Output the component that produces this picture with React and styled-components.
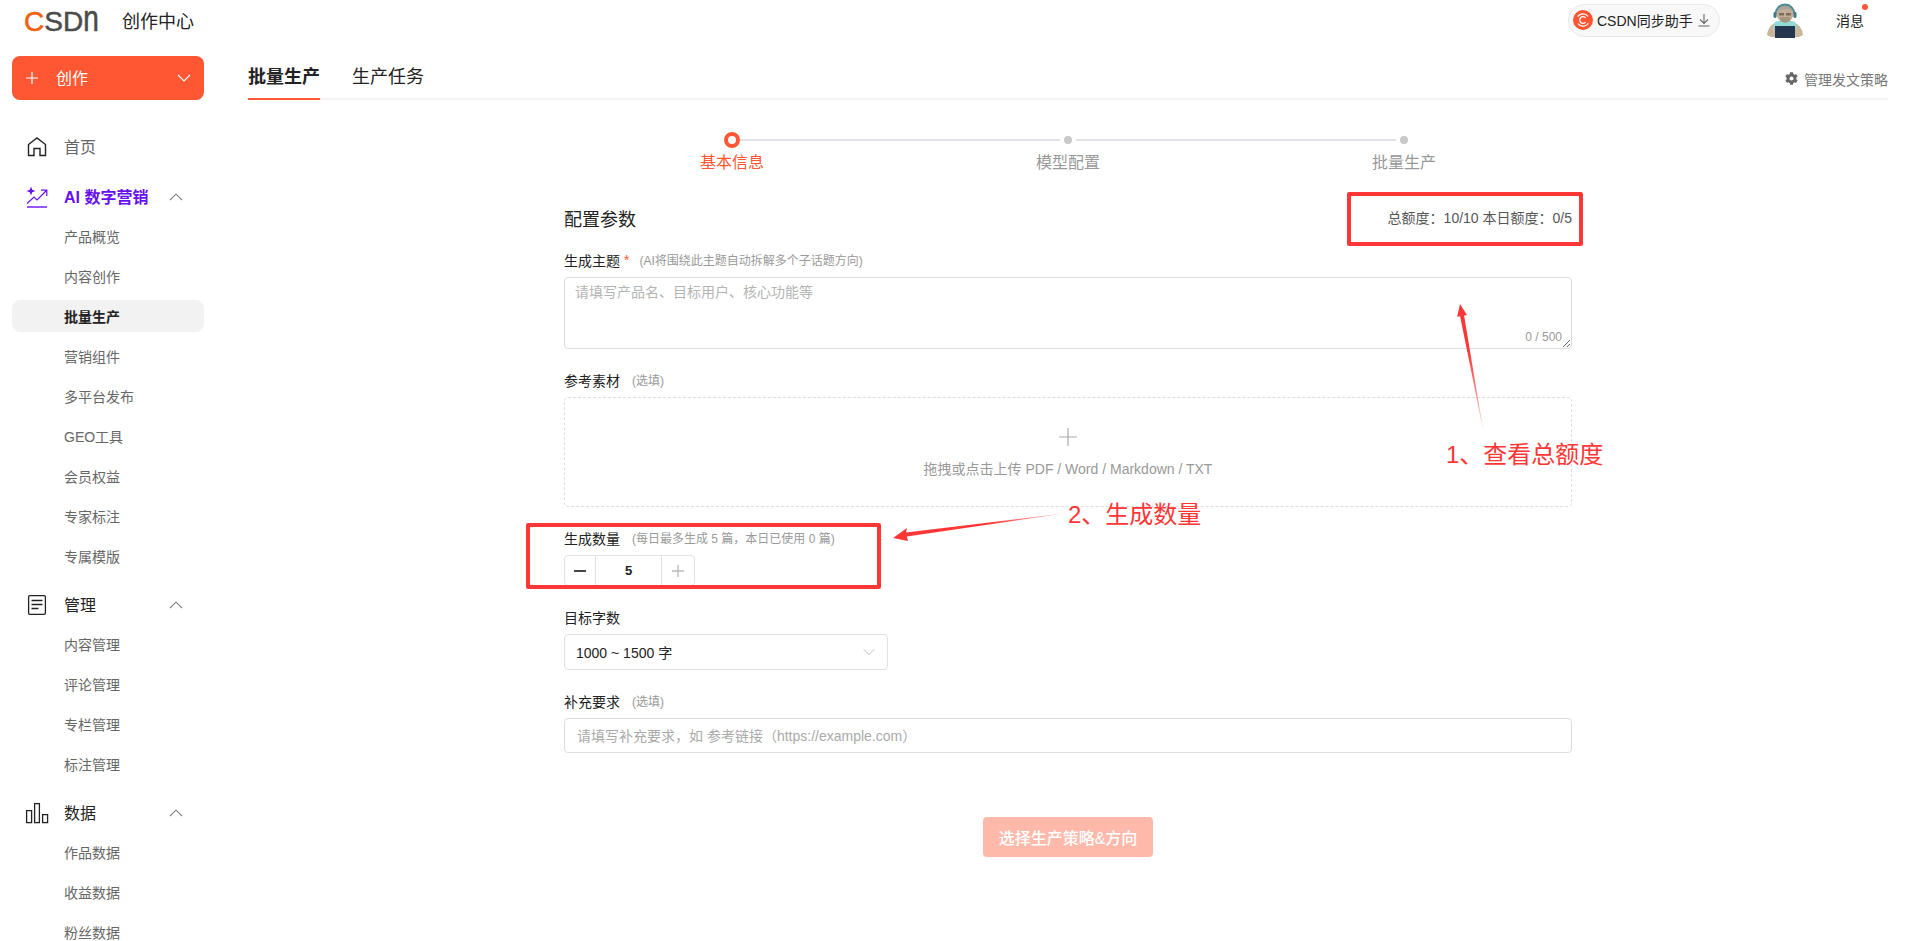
import styled, { createGlobalStyle } from "styled-components";
import { FaCog } from "react-icons/fa";

const FONT = `"Liberation Sans", "Noto Sans CJK SC", sans-serif`;
const ORANGE = "#ff5733";
const RED = "#ff3636";

const GlobalStyle = createGlobalStyle`
  html, body { margin: 0; padding: 0; background: #fff; }
  body { font-family: ${FONT}; color: #222; }
  * { box-sizing: border-box; }
`;

const Shell = styled.div`
  position: relative;
  height: 941px;
  overflow: hidden;
`;

/* top bar */
const TopBar = styled.header`
  height: 40px;
  display: flex;
  align-items: center;
  padding: 0 55px 0 24px;
`;
const Logo = styled.div`
  display: flex;
  align-items: flex-end;
  width: 98px;
  height: 30px;
  margin-top: 4px;
  font-size: 28px;
  line-height: 30px;
  color: #4b4b4b;
  -webkit-text-stroke: 0.5px currentColor;
`;
const LogoC = styled.span`
  color: #f0600f;
`;
const LogoN = styled.span`
  display: inline-block;
  transform: scaleY(1.3);
  transform-origin: 50% 80%;
`;
const AppName = styled.div`
  font-size: 18px;
  color: #222;
`;
const TopRight = styled.div`
  margin-left: auto;
  display: flex;
  align-items: center;
`;
const SyncChip = styled.div`
  width: 152px;
  height: 33px;
  display: flex;
  align-items: center;
  gap: 4px;
  padding-left: 4px;
  border: 1px solid #e8e8e8;
  border-radius: 17px;
  background: #f8f8f8;
  font-size: 14px;
  color: #222;
`;
const Avatar = styled.div`
  width: 38px;
  height: 36px;
  margin: 0 32px 0 46px;
`;
const Msg = styled.div`
  position: relative;
  font-size: 14px;
  color: #222;
  width: 28px;
`;
const MsgDot = styled.span`
  position: absolute;
  top: -6px;
  right: -4px;
  width: 6px;
  height: 6px;
  border-radius: 50%;
  background: ${ORANGE};
`;

/* body */
const Body = styled.div`
  display: flex;
  height: 901px;
`;
const Sidebar = styled.aside`
  width: 216px;
  flex: none;
  padding: 16px 12px 0;
`;
const CreateBtn = styled.div`
  height: 44px;
  display: flex;
  align-items: center;
  padding: 0 12px 0 14px;
  border-radius: 8px;
  background: ${ORANGE};
  color: #fff;
  font-size: 16px;
`;
const CreateLabel = styled.span`
  margin-left: 18px;
  padding-bottom: 2px;
  flex: 1;
`;
const NavHead = styled.div`
  height: 38px;
  margin-top: ${(p) => p.$mt || 10}px;
  display: flex;
  align-items: center;
  padding: 0 0 2px 52px;
  position: relative;
  font-size: 16px;
  font-weight: ${(p) => (p.$ai ? 700 : 400)};
  color: ${(p) => p.$color || "#222"};
`;
const NavIcon = styled.span`
  position: absolute;
  left: 12px;
  top: 50%;
  transform: translateY(-50%);
  display: flex;
  width: 26px;
  justify-content: center;
`;
const NavChevron = styled.span`
  position: absolute;
  left: 156px;
  top: 50%;
  transform: translateY(-50%);
  display: flex;
`;
const NavList = styled.div`
  display: flex;
  flex-direction: column;
  gap: 8px;
  padding: 4px 0;
`;
const NavItem = styled.div`
  height: 32px;
  display: flex;
  align-items: center;
  padding: 0 0 1px 52px;
  border-radius: 8px;
  font-size: 14px;
  font-weight: ${(p) => (p.$active ? 700 : 400)};
  color: ${(p) => (p.$active ? "#222" : "#666")};
  background: ${(p) => (p.$active ? "#f2f2f2" : "transparent")};
`;

/* main */
const Main = styled.main`
  flex: 1;
  padding: 16px 31px 0 32px;
`;
const TabBar = styled.div`
  height: 44px;
  display: flex;
  align-items: flex-start;
  border-bottom: 2px solid #f4f4f4;
`;
const Tab = styled.div`
  height: 44px;
  line-height: 42px;
  margin-right: 32px;
  font-size: 18px;
  font-weight: ${(p) => (p.$active ? 700 : 400)};
  color: #222;
  border-bottom: 2px solid ${(p) => (p.$active ? ORANGE : "transparent")};
`;
const Strategy = styled.div`
  margin-left: auto;
  height: 44px;
  padding-top: 1px;
  display: flex;
  align-items: center;
  gap: 6px;
  font-size: 14px;
  color: #777;
`;
const Form = styled.div`
  width: 1008px;
  margin: 32px auto 0;
`;
const StepRail = styled.div`
  display: flex;
  align-items: center;
  padding: 0 160px;
`;
const StepRing = styled.div`
  width: 16px;
  height: 16px;
  flex: none;
  border-radius: 50%;
  background: #fff;
  border: 4px solid ${ORANGE};
`;
const StepDot = styled.div`
  width: 8px;
  height: 8px;
  flex: none;
  margin: 0 4px;
  border-radius: 50%;
  background: #c8c8c8;
`;
const StepLine = styled.div`
  flex: 1;
  height: 2px;
  background: #e0e0e6;
`;
const StepLabels = styled.div`
  display: grid;
  grid-template-columns: repeat(3, 1fr);
  margin-top: 4px;
`;
const StepLabel = styled.div`
  text-align: center;
  font-size: 16px;
  line-height: 22px;
  color: ${(p) => (p.$on ? ORANGE : "#999")};
`;
const FormHead = styled.div`
  display: flex;
  justify-content: space-between;
  align-items: center;
  height: 28px;
  margin: 31px 0 18px;
`;
const FormTitle = styled.div`
  font-size: 18px;
  padding-bottom: 2px;
  color: #222;
`;
const Quota = styled.div`
  font-size: 14px;
  padding-bottom: 4px;
  color: #555;
`;
const Field = styled.div`
  margin-bottom: 22px;
`;
const Label = styled.div`
  height: 20px;
  margin-bottom: 6px;
  padding-bottom: 3px;
  display: flex;
  align-items: center;
  font-size: 14px;
  color: #222;
`;
const Star = styled.span`
  color: ${ORANGE};
  margin-left: 4px;
`;
const Hint = styled.span`
  margin-left: ${(p) => p.$ml || 12}px;
  font-size: 12px;
  color: #999;
`;
const AreaWrap = styled.div`
  position: relative;
  height: 72px;
`;
const Area = styled.textarea`
  display: block;
  width: 100%;
  height: 72px;
  padding: 4px 10px;
  border: 1px solid #dcdde3;
  border-radius: 4px;
  outline: none;
  font: 14px/20px ${FONT};
  resize: vertical;
  &::placeholder { color: #b4b4b4; }
`;
const Counter = styled.span`
  position: absolute;
  right: 10px;
  bottom: 5px;
  font-size: 12px;
  color: #999;
`;
const Drop = styled.div`
  height: 110px;
  display: flex;
  flex-direction: column;
  align-items: center;
  border: 1px dashed #dedede;
  border-radius: 4px;
  padding-top: 30px;
  font-size: 14px;
  color: #999;
`;
const DropText = styled.div`
  margin-top: 13px;
  line-height: 20px;
`;
const Counterbox = styled.div`
  width: 131px;
  height: 31px;
  display: flex;
  border: 1px solid #e2e2e2;
  border-radius: 4px;
`;
const CountBtn = styled.div`
  width: ${(p) => p.$w}px;
  flex: none;
  display: flex;
  align-items: center;
  justify-content: center;
  border-left: ${(p) => (p.$line ? "1px solid #e2e2e2" : "none")};
  border-right: ${(p) => (p.$lineR ? "1px solid #e2e2e2" : "none")};
`;
const CountValue = styled.div`
  flex: 1;
  text-align: center;
  line-height: 29px;
  font-size: 13px;
  font-weight: 700;
`;
const Select = styled.div`
  width: 324px;
  height: 36px;
  display: flex;
  align-items: center;
  justify-content: space-between;
  padding: 0 11px;
  border: 1px solid #e2e2e2;
  border-radius: 4px;
  font-size: 14px;
  color: #222;
`;
const Input = styled.input`
  display: block;
  width: 100%;
  height: 35px;
  padding: 0 12px;
  border: 1px solid #dcdde3;
  border-radius: 4px;
  outline: none;
  font: 14px ${FONT};
  &::placeholder { color: #aaa; }
`;
const Actions = styled.div`
  display: flex;
  justify-content: center;
  margin-top: 64px;
`;
const Submit = styled.div`
  width: 170px;
  height: 40px;
  display: flex;
  align-items: center;
  justify-content: center;
  border-radius: 4px;
  background: #ffb9ab;
  color: #fff;
  font-size: 16px;
  font-weight: 500;
`;

/* red notes drawn on top of the screenshot */
const NoteBox = styled.div`
  position: absolute;
  left: ${(p) => p.$x}px;
  top: ${(p) => p.$y}px;
  width: ${(p) => p.$w}px;
  height: ${(p) => p.$h}px;
  border: 4px solid ${RED};
  border-radius: 2px;
`;
const NoteText = styled.div`
  position: absolute;
  left: ${(p) => p.$x}px;
  top: ${(p) => p.$y}px;
  font-size: 24px;
  line-height: 32px;
  color: ${RED};
  white-space: nowrap;
`;
const ArrowLayer = styled.svg`
  position: absolute;
  left: 0;
  top: 0;
  pointer-events: none;
`;

const Chevron = ({ up, color = "#888", size = 16 }) => (
  <svg width={size} height={size} viewBox="0 0 16 16" fill="none" stroke={color} strokeWidth="1.1">
    <path d={up ? "M2 11L8 5l6 6" : "M2 5l6 6 6-6"} />
  </svg>
);

const HomeIcon = () => (
  <svg width="20" height="20" viewBox="0 0 20 20" fill="none" stroke="#222" strokeWidth="1.4">
    <path d="M1.5 7.5L10 1l8.5 6.5v11H13v-7H7v7H1.5z" />
  </svg>
);
const AiIcon = () => (
  <svg width="22" height="22" viewBox="0 0 22 22" fill="none" stroke="#6610f2" strokeWidth="1.2">
    <path d="M5 0.5l1.2 3.3 3.3 1.2-3.3 1.2L5 9.5 3.8 6.2 0.5 5l3.3-1.2z" fill="#6610f2" stroke="none" />
    <path d="M1 17.5l7-6.5 3 3L20.5 4.5M15 4.2h5.8V10" />
    <path d="M1 21h20" strokeWidth="1.4" />
  </svg>
);
const DocIcon = () => (
  <svg width="20" height="22" viewBox="0 0 20 22" fill="none" stroke="#222" strokeWidth="1.3">
    <rect x="1.6" y="1.6" width="16.8" height="18.8" rx="1.4" />
    <path d="M4.5 6.5h11M4.5 10.5h11M4.5 14.5h7" />
  </svg>
);
const BarsIcon = () => (
  <svg width="24" height="22" viewBox="0 0 24 22" fill="none" stroke="#222" strokeWidth="1.3">
    <rect x="1.6" y="8.6" width="5" height="12" />
    <rect x="9.6" y="1.6" width="4.8" height="19" />
    <rect x="17.6" y="12.6" width="5" height="8" />
  </svg>
);
const SyncIcon = () => (
  <svg width="20" height="20" viewBox="0 0 20 20" fill="none">
    <circle cx="10" cy="10" r="10" fill="#fc5531" />
    <path d="M15 6.4A6.3 6.3 0 0 0 4.6 6.8M5 13.6a6.3 6.3 0 0 0 10.4-.4" stroke="#fff" strokeWidth="1.2" />
    <path d="M12.6 7.9a3.3 3.3 0 1 0 0 4.2" stroke="#fff" strokeWidth="1.3" />
  </svg>
);
const DownIcon = () => (
  <svg width="14" height="14" viewBox="0 0 14 14" fill="none" stroke="#666" strokeWidth="1.1">
    <path d="M7 1v9M3 6.5L7 10.5l4-4M1.5 13h11" />
  </svg>
);
const AvatarPic = () => (
  <svg width="38" height="36" viewBox="0 0 38 36">
    <path d="M1 33c1-8 5-11 10-13h16c5 2 9 5 10 13l-4 2H5z" fill="#c9b79d" />
    <path d="M9 20c3-2 17-2 20 0l2 7-24 0z" fill="#93dcd6" />
    <circle cx="19" cy="11" r="9" fill="#c2ae98" />
    <path d="M10 11c0-6 4-9 9-9s9 3 9 9c-2-3-5-4-9-4s-7 1-9 4z" fill="#a9a39a" />
    <path d="M9.5 12a9.5 9.5 0 0 1 19 0" fill="none" stroke="#4d8a98" strokeWidth="1.8" />
    <rect x="7.5" y="10" width="3" height="6" rx="1.4" fill="#3f7888" />
    <rect x="27.5" y="10" width="3" height="6" rx="1.4" fill="#3f7888" />
    <path d="M13 11h5v2.5h-5zM20 11h5v2.5h-5z" fill="#7d6a5a" />
    <path d="M14 15h10v4l-5 2-5-2z" fill="#a8957f" />
    <rect x="9" y="24" width="20" height="12" fill="#24374e" />
  </svg>
);

const menu = [
  { title: "AI 数字营销", icon: <AiIcon />, ai: true, items: ["产品概览", "内容创作", "批量生产", "营销组件", "多平台发布", "GEO工具", "会员权益", "专家标注", "专属模版"] },
  { title: "管理", icon: <DocIcon />, items: ["内容管理", "评论管理", "专栏管理", "标注管理"] },
  { title: "数据", icon: <BarsIcon />, items: ["作品数据", "收益数据", "粉丝数据"] },
];

const App = () => (
  <Shell>
    <GlobalStyle />
    <TopBar>
      <Logo>
        <LogoC>C</LogoC>SD<LogoN>n</LogoN>
      </Logo>
      <AppName>创作中心</AppName>
      <TopRight>
        <SyncChip>
          <SyncIcon />
          <span>CSDN同步助手</span>
          <DownIcon />
        </SyncChip>
        <Avatar><AvatarPic /></Avatar>
        <Msg>消息<MsgDot /></Msg>
      </TopRight>
    </TopBar>
    <Body>
      <Sidebar>
        <CreateBtn>
          <svg width="12" height="12" viewBox="0 0 12 12" stroke="#fff" strokeWidth="1.2"><path d="M6 0v12M0 6h12" /></svg>
          <CreateLabel>创作</CreateLabel>
          <Chevron color="#fff" />
        </CreateBtn>
        <NavHead $mt={28} $color="#666">
          <NavIcon><HomeIcon /></NavIcon>首页
        </NavHead>
        {menu.map((group, i) => (
          <div key={group.title}>
            <NavHead $mt={i === 0 ? 12 : 10} $ai={group.ai} $color={group.ai ? "#6610f2" : "#222"}>
              <NavIcon>{group.icon}</NavIcon>
              {group.title}
              <NavChevron><Chevron up /></NavChevron>
            </NavHead>
            <NavList>
              {group.items.map((item) => (
                <NavItem key={item} $active={item === "批量生产"}>{item}</NavItem>
              ))}
            </NavList>
          </div>
        ))}
      </Sidebar>
      <Main>
        <TabBar>
          <Tab $active>批量生产</Tab>
          <Tab>生产任务</Tab>
          <Strategy><FaCog size={13} color="#666" />管理发文策略</Strategy>
        </TabBar>
        <Form>
          <StepRail>
            <StepRing />
            <StepLine />
            <StepDot />
            <StepLine />
            <StepDot />
          </StepRail>
          <StepLabels>
            <StepLabel $on>基本信息</StepLabel>
            <StepLabel>模型配置</StepLabel>
            <StepLabel>批量生产</StepLabel>
          </StepLabels>
          <FormHead>
            <FormTitle>配置参数</FormTitle>
            <Quota>总额度：10/10 本日额度：0/5</Quota>
          </FormHead>
          <Field>
            <Label>生成主题<Star>*</Star><Hint $ml={10}>(AI将围绕此主题自动拆解多个子话题方向)</Hint></Label>
            <AreaWrap>
              <Area placeholder="请填写产品名、目标用户、核心功能等" />
              <Counter>0 / 500</Counter>
            </AreaWrap>
          </Field>
          <Field>
            <Label>参考素材<Hint>(选填)</Hint></Label>
            <Drop>
              <svg width="18" height="18" viewBox="0 0 18 18" stroke="#aaa" strokeWidth="1.2"><path d="M9 0v18M0 9h18" /></svg>
              <DropText>拖拽或点击上传 PDF / Word / Markdown / TXT</DropText>
            </Drop>
          </Field>
          <Field>
            <Label>生成数量<Hint>(每日最多生成 5 篇，本日已使用 0 篇)</Hint></Label>
            <Counterbox>
              <CountBtn $w={31} $lineR>
                <svg width="12" height="2" viewBox="0 0 12 2"><path d="M0 1h12" stroke="#444" strokeWidth="2" /></svg>
              </CountBtn>
              <CountValue>5</CountValue>
              <CountBtn $w={33} $line>
                <svg width="12" height="12" viewBox="0 0 12 12" stroke="#bbb" strokeWidth="1.4"><path d="M6 0v12M0 6h12" /></svg>
              </CountBtn>
            </Counterbox>
          </Field>
          <Field>
            <Label>目标字数</Label>
            <Select>1000 ~ 1500 字<Chevron color="#bbb" size={14} /></Select>
          </Field>
          <Field>
            <Label>补充要求<Hint>(选填)</Hint></Label>
            <Input placeholder="请填写补充要求，如 参考链接（https://example.com）" />
          </Field>
          <Actions><Submit>选择生产策略&amp;方向</Submit></Actions>
        </Form>
      </Main>
    </Body>
    <NoteBox $x={1347} $y={192} $w={236} $h={54} />
    <NoteBox $x={526} $y={523} $w={355} $h={66} />
    <ArrowLayer width="1919" height="941" viewBox="0 0 1919 941">
      <defs>
        <linearGradient id="fade1" gradientUnits="userSpaceOnUse" x1="1483" y1="432" x2="1468" y2="350">
          <stop offset="0" stopColor={RED} stopOpacity="0.25" />
          <stop offset="1" stopColor={RED} />
        </linearGradient>
        <linearGradient id="fade2" gradientUnits="userSpaceOnUse" x1="1068" y1="513" x2="990" y2="524">
          <stop offset="0" stopColor={RED} stopOpacity="0.25" />
          <stop offset="1" stopColor={RED} />
        </linearGradient>
      </defs>
      <path d="M1483.5 432L1464.1 315.4 1467 314.9 1460 304 1457.2 316.7 1460.1 316.2z" fill="url(#fade1)" />
      <path d="M1068 513L906 532.5 907 528 893 538 908 541 906.8 536.5z" fill="url(#fade2)" />
    </ArrowLayer>
    <NoteText $x={1446} $y={439}>1、查看总额度</NoteText>
    <NoteText $x={1068} $y={499}>2、生成数量</NoteText>
  </Shell>
);

export default App;
